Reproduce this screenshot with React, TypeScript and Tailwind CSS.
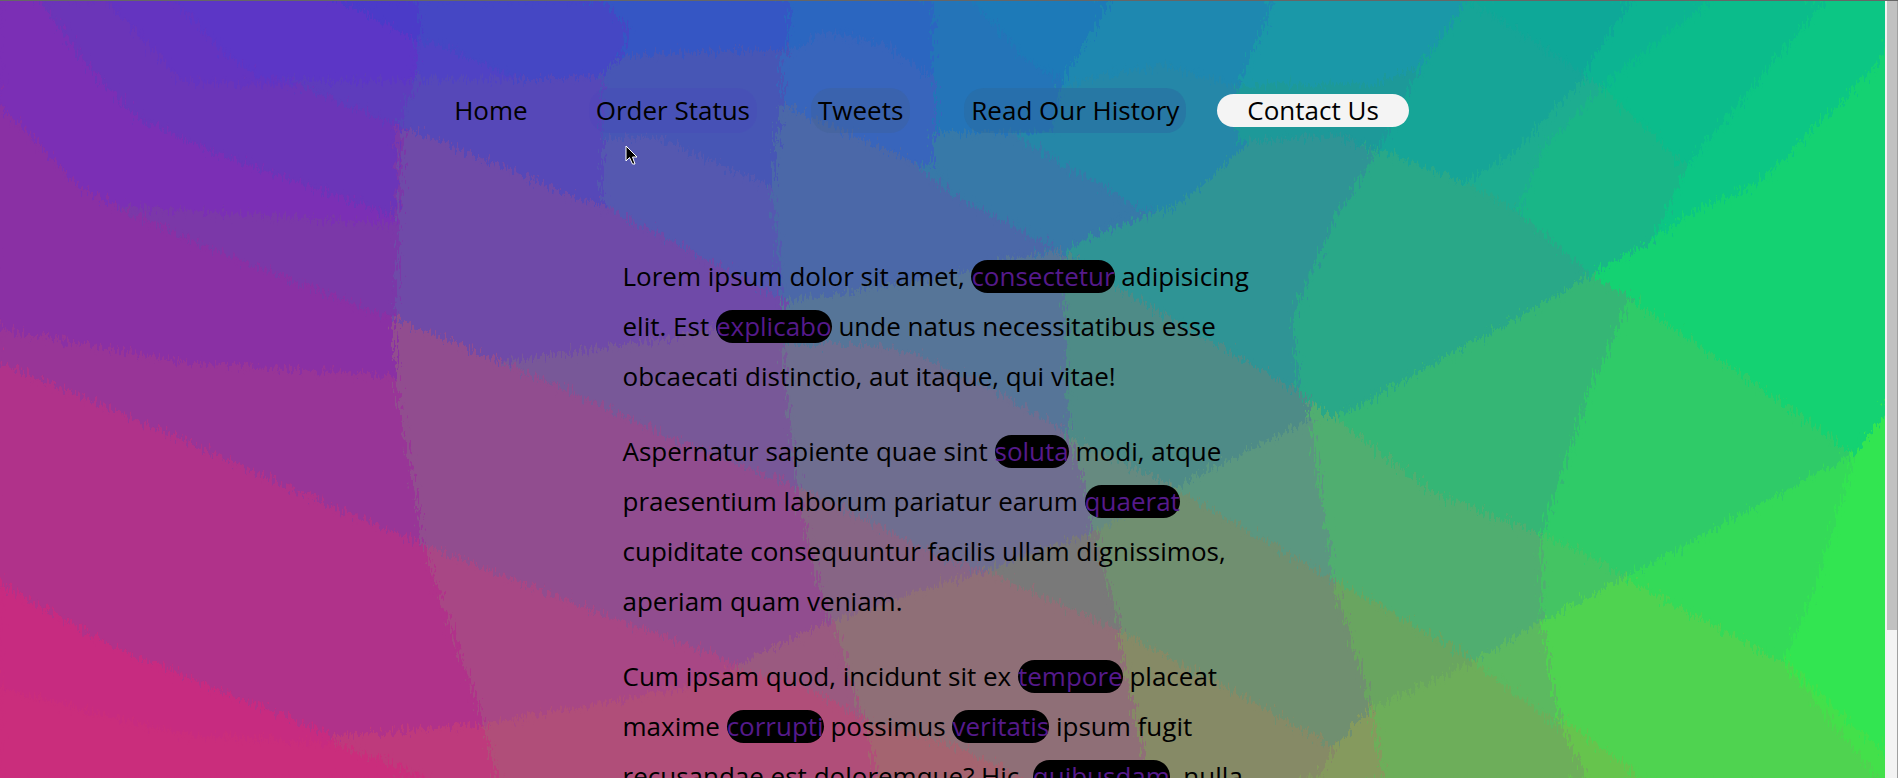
import type { ReactNode } from "react";

const facets: [string, string][] = [
  ["#7b2fb5", "0,0 42,0 91,67 139,117 212,150 364,203 396,215 396,225 121,207 79,187 0,107"],
  ["#6b35b8", "42,0 109,0 182,77 297,83 392,120 402,200 396,215 364,203 212,150 139,117 91,67"],
  ["#6434c0", "109,0 176,0 224,50 260,75 300,84 182,79"],
  ["#5c36c6", "176,0 345,0 418,40 412,80 388,82 260,75 224,50"],
  ["#5e3cbc", "297,83 388,81 418,80 404,130 392,120"],
  ["#4b3bc8", "345,0 420,0 422,42"],
  ["#5042c4", "418,40 442,43 527,80 418,82"],
  ["#4547c4", "420,0 606,0 630,27 622,55 606,73 527,80 442,43 422,40"],
  ["#3556c4", "606,0 794,0 788,50 679,53 622,57 630,27"],
  ["#2b66c0", "794,0 935,0 945,50 935,80 885,45 840,30 788,48"],
  ["#2474b8", "935,0 975,0 1030,60 1064,82 1053,133 935,133 935,80"],
  ["#5648b8", "418,80 527,80 606,76 610,203 563,193 412,130 400,120"],
  ["#4756b5", "622,57 679,53 788,50 782,107 774,190 654,140 604,140 604,76"],
  ["#5558b0", "604,140 654,137 778,190 784,297 624,217 604,200"],
  ["#3865bc", "782,60 824,33 885,45 935,80 935,165 909,160 848,133 786,105"],
  ["#4b68a8", "782,105 848,133 909,160 950,193 1053,247 1005,257 950,280 794,302 784,295 774,190"],
  ["#6f4aa8", "402,133 412,130 563,193 624,217 784,300 778,317 666,340 503,363 394,320"],
  ["#7b38a8", "121,207 396,225 402,133 394,320 212,250"],
  ["#8a30a4", "0,107 79,187 121,210 212,250 394,320 404,378 182,363 0,330"],
  ["#983597", "0,330 182,363 404,378 402,400 426,520 422,546 303,495 182,440 61,389 0,363"],
  ["#785898", "503,363 666,340 784,315 788,389 800,489 679,442 563,389"],
  ["#914d8f", "394,320 503,363 563,389 679,442 800,489 824,602 830,622 739,666 606,616 424,546 418,500 400,400"],
  ["#567598", "794,300 895,285 979,270 1063,250 1067,300 1067,440 992,389 920,357 873,345 785,345"],
  ["#6f6e90", "785,345 873,345 920,357 992,389 1065,432 1083,469 1094,532 986,572 950,562 800,489 788,389"],
  ["#4e8b87", "1065,255 1126,290 1204,333 1301,389 1313,422 1174,489 1071,439"],
  ["#668a80", "1071,439 1174,489 1095,532 1083,469"],
  ["#2f9495", "1063,248 1174,207 1240,140 1337,133 1380,157 1337,217 1295,317 1299,389 1126,290"],
  ["#2587a8", "1053,133 1064,82 1162,63 1240,83 1250,140 1174,207 1137,210 1010,133"],
  ["#3779a8", "935,133 1010,133 1137,207 1063,250 950,190 935,165"],
  ["#1d7ab8", "975,0 1113,0 1064,80 1030,60"],
  ["#1e88b0", "1113,0 1277,0 1240,85 1162,63 1064,82"],
  ["#1a98a8", "1277,0 1469,0 1422,67 1372,87 1240,87"],
  ["#1d9999", "1240,85 1372,85 1422,67 1380,150 1337,133 1240,140"],
  ["#0ea898", "1469,0 1634,0 1585,75"],
  ["#16a597", "1469,0 1585,75 1563,110 1513,160 1465,183 1380,150 1422,67"],
  ["#1dad90", "1585,80 1604,87 1544,150 1519,213 1465,183 1513,155"],
  ["#0cb492", "1634,0 1713,0 1604,87 1585,75"],
  ["#19b687", "1604,87 1689,167 1659,233 1592,277 1519,213 1544,150"],
  ["#0bbc8b", "1713,0 1828,0 1689,167 1604,85"],
  ["#0cc684", "1828,0 1886,0 1886,57 1762,183 1689,215 1655,240 1689,165"],
  ["#14d272", "1886,57 1762,183 1689,215 1671,230 1592,277 1631,300 1762,389 1854,455 1886,415"],
  ["#29a888", "1380,150 1465,183 1519,213 1592,277 1404,380 1333,418 1301,389 1295,317 1337,217"],
  ["#35b675", "1592,277 1635,300 1604,389 1544,535 1435,495 1337,419 1404,382"],
  ["#2fcb68", "1631,300 1762,389 1854,455 1628,578 1544,535 1592,389"],
  ["#5b9780", "1313,420 1337,582 1174,489"],
  ["#50ae70", "1333,418 1435,495 1540,535 1544,622 1477,662 1337,582 1313,425"],
  ["#708f70", "1174,489 1331,580 1374,706 1337,749 1156,652 1120,632 1095,532"],
  ["#797979", "1095,532 1120,632 986,572"],
  ["#876585", "800,489 950,562 986,572 900,600 832,622 812,550"],
  ["#8f6f77", "986,572 1120,632 1150,778 1020,778 950,745 866,722 836,622 900,598"],
  ["#a84785", "424,546 606,616 739,666 685,689 485,726 440,600"],
  ["#9a5a80", "739,666 832,622 850,690 866,722 800,690 739,680"],
  ["#b0328a", "0,363 61,389 182,440 303,495 424,546 440,600 485,726 400,735 333,737 121,652 0,585"],
  ["#c72b80", "0,585 121,652 333,737 340,762 180,740 0,690"],
  ["#ca2d7c", "0,690 180,735 333,745 430,778 0,778"],
  ["#be3a7c", "333,737 485,726 500,778 430,778"],
  ["#b04e79", "485,726 685,689 739,672 800,685 866,722 880,778 500,778"],
  ["#a46470", "866,722 950,745 1020,778 880,778"],
  ["#868a66", "1120,632 1337,749 1320,778 1150,778"],
  ["#859a5e", "1337,749 1374,706 1385,778 1320,778"],
  ["#69a560", "1337,582 1477,662 1374,709"],
  ["#6dae5a", "1477,662 1579,736 1590,778 1385,778 1374,709"],
  ["#5cb960", "1544,622 1477,662 1561,725"],
  ["#44c463", "1544,535 1628,578 1544,622"],
  ["#66c44d", "1561,720 1645,778 1590,778"],
  ["#4fd350", "1628,578 1786,662 1830,720 1886,790 1645,778 1561,716 1544,622"],
  ["#34da58", "1854,455 1628,578 1786,662 1817,589 1857,465"],
  ["#32e551", "1857,455 1886,415 1886,760 1786,662 1817,589"],
  ["#43e04a", "1786,662 1886,758 1886,785"],
];

function Backdrop() {
  return (
    <svg
      aria-hidden="true"
      className="absolute inset-0 size-full"
      viewBox="0 0 1886 778"
      preserveAspectRatio="none"
    >
      <filter id="ragged" x="-2%" y="-4%" width="104%" height="108%" colorInterpolationFilters="sRGB">
        <feTurbulence type="fractalNoise" baseFrequency="0.4 0.1" numOctaves="3" seed="4" />
        <feDisplacementMap in="SourceGraphic" scale="24" xChannelSelector="R" yChannelSelector="G" />
      </filter>
      <g filter="url(#ragged)" strokeLinejoin="round">
        {facets.map(([color, points]) => (
          <polygon key={points} points={points} fill={color} stroke={color} strokeWidth="36" />
        ))}
        {facets.map(([color, points]) => (
          <polygon key={points} points={points} fill={color} stroke={color} strokeWidth="3" />
        ))}
      </g>
    </svg>
  );
}

const links: [string, string][] = [
  ["Home", ""],
  ["Order Status", "bg-[#4a3fc0]/20"],
  ["Tweets", "bg-[#406090]/30"],
  ["Read Our History", "bg-[#2a6aa0]/50"],
];

function Term({ children }: { children: ReactNode }) {
  return (
    <a href="#" className="inline-block rounded-[20px] bg-black leading-[33px] text-[#551a8b]">
      {children}
    </a>
  );
}

export default function App() {
  return (
    <div className="flex h-screen overflow-hidden border-t border-[#666] bg-[#797979] font-['Open_Sans','Noto_Sans',sans-serif] text-[26px] text-black">
      <div className="relative flex-1 overflow-hidden">
        <Backdrop />
        <div className="relative">
          <nav className="flex justify-center pt-[87px] pr-[52px]">
            <ul className="flex items-center gap-[8px]">
              {links.map(([label, tint]) => (
                <li key={label} className="px-[23px]">
                  <a href="#" className={`block rounded-[20px] px-[7px] py-[6px] leading-[33px] ${tint}`}>
                    {label}
                  </a>
                </li>
              ))}
              <li>
                <a href="#" className="block rounded-[20px] bg-[#f4f4f4] px-[30px] leading-[33px]">
                  Contact Us
                </a>
              </li>
            </ul>
          </nav>
          <main className="mx-auto mt-[118px] flex max-w-[640px] flex-col gap-[25px] leading-[50px]">
            <p>
              Lorem ipsum dolor sit amet, <Term>consectetur</Term> adipisicing elit. Est <Term>explicabo</Term> unde
              natus necessitatibus esse obcaecati distinctio, aut itaque, qui vitae!
            </p>
            <p>
              Aspernatur sapiente quae sint <Term>soluta</Term> modi, atque praesentium laborum pariatur earum{" "}
              <Term>quaerat</Term> cupiditate consequuntur facilis ullam dignissimos, aperiam quam veniam.
            </p>
            <p>
              Cum ipsam quod, incidunt sit ex <Term>tempore</Term> placeat maxime <Term>corrupti</Term> possimus{" "}
              <Term>veritatis</Term> ipsum fugit recusandae est doloremque? Hic, <Term>quibusdam</Term>, nulla.
            </p>
          </main>
        </div>
        <svg aria-hidden="true" className="absolute top-[144px] left-[625px] h-[20px] w-[13px]" viewBox="0 0 13 20">
          <path d="M1 1V16L4.500 12.500L7.500 19H10L7.500 12H12Z" fill="#000" stroke="#fff" strokeWidth="1" />
        </svg>
      </div>
      <div aria-hidden="true" className="w-[13px] border-r border-[#a0a0a0] bg-[#f3f3f3] pl-[2px]">
        <div className="h-[81%] bg-[#c1c1c1]" />
      </div>
    </div>
  );
}
